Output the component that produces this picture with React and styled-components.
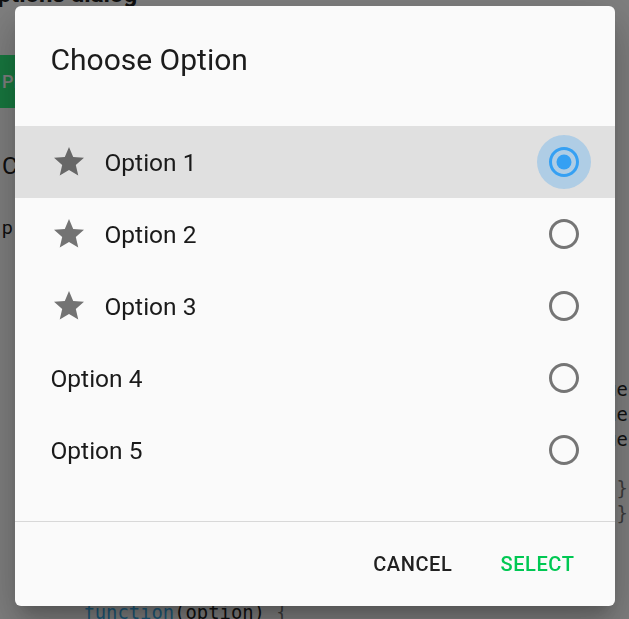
import React, { useState } from 'react';
import styled, { createGlobalStyle } from 'styled-components';

const GlobalStyle = createGlobalStyle`
  html, body {
    margin: 0;
    padding: 0;
    background: #ffffff;
    overflow: hidden;
  }
  body {
    font-family: Roboto, "Noto Sans", "Liberation Sans", sans-serif;
    color: #212121;
  }
`;

/* page behind the dialog */

const Page = styled.main`
  margin: -21px 0 0 -19px;
  width: 760px;
`;

const PageTitle = styled.h2`
  margin: 0;
  font-size: 24px;
  line-height: 30px;
  font-weight: 700;
  white-space: nowrap;
`;

const PickButton = styled.button`
  display: block;
  margin-top: 46px;
  height: 53px;
  padding: 0 24px 0 21px;
  border: none;
  background: #2ef07e;
  color: #ffffff;
  font-family: inherit;
  font-size: 18px;
  font-weight: 500;
  text-transform: uppercase;
`;

const Result = styled.p`
  margin: 40px 0 0 21px;
  font-size: 24px;
  line-height: 36px;
`;

const Hint = styled.p`
  margin: 30px 0 0 21px;
  font-size: 19px;
  line-height: 28px;
`;

const Code = styled.pre`
  margin: 136px 0 0 57px;
  font-family: "DejaVu Sans Mono", "Liberation Mono", monospace;
  font-size: 18.85px;
  line-height: 24.8px;
  color: #222222;
`;

const Punct = styled.span`
  color: #777777;
`;

const Keyword = styled.span`
  color: #3ab0f0;
`;

/* dialog */

const Backdrop = styled.div`
  position: fixed;
  inset: 0;
  background: rgba(0, 0, 0, 0.5);
  display: flex;
  justify-content: center;
  align-items: flex-start;
  padding-top: 6px;
`;

const Dialog = styled.section`
  width: 600px;
  background: #fafafa;
  border-radius: 6px;
  overflow: hidden;
  box-shadow: 0 11px 15px -7px rgba(0, 0, 0, 0.2),
    0 24px 38px 3px rgba(0, 0, 0, 0.14),
    0 9px 46px 8px rgba(0, 0, 0, 0.12);
`;

const DialogTitle = styled.h2`
  box-sizing: border-box;
  height: 120px;
  margin: 0;
  padding: 36px 36px 0;
  font-size: 30px;
  line-height: 36px;
  font-weight: 400;
  color: #1c1c1c;
`;

const OptionList = styled.ul`
  list-style: none;
  margin: 0;
  padding: 0 0 35px;
  border-bottom: 1px solid #d8d8d8;
`;

const OptionRow = styled.li`
  display: flex;
  align-items: center;
  height: 72px;
  padding: 0 24px 0 36px;
  background: ${p => (p.$selected ? '#e0e0e0' : 'transparent')};
  cursor: pointer;
`;

const OptionIcon = styled.svg`
  width: 36px;
  height: 36px;
  margin-right: 18px;
  flex-shrink: 0;
  fill: rgba(0, 0, 0, 0.54);
`;

const OptionLabel = styled.span`
  flex: 1;
  font-size: 24.5px;
  font-weight: 400;
  color: #1a1a1a;
`;

const RadioBox = styled.span`
  width: 54px;
  height: 54px;
  border-radius: 50%;
  display: flex;
  align-items: center;
  justify-content: center;
  background: ${p => (p.$checked ? 'rgba(33, 150, 243, 0.26)' : 'transparent')};
`;

const RadioSvg = styled.svg`
  width: 36px;
  height: 36px;
  fill: ${p => (p.$checked ? '#35a0f3' : '#757575')};
`;

const Actions = styled.footer`
  display: flex;
  justify-content: flex-end;
  align-items: center;
  gap: 24px;
  height: 84px;
  padding-right: 28px;
`;

const ActionButton = styled.button`
  border: none;
  background: none;
  padding: 0 12px;
  height: 54px;
  font-family: inherit;
  font-size: 20px;
  font-weight: 500;
  letter-spacing: 0.6px;
  text-transform: uppercase;
  color: ${p => (p.$primary ? '#00c853' : '#212121')};
  cursor: pointer;
`;

const StarIcon = () => (
  <OptionIcon viewBox="0 0 24 24">
    <path d="M12 17.27L18.18 21l-1.64-7.03L22 9.24l-7.19-.61L12 2 9.19 8.63 2 9.24l5.46 4.73L5.82 21z" />
  </OptionIcon>
);

const Radio = ({ checked }) => (
  <RadioBox $checked={checked}>
    <RadioSvg viewBox="0 0 24 24" $checked={checked}>
      <path d="M12 2C6.48 2 2 6.48 2 12s4.48 10 10 10 10-4.48 10-10S17.52 2 12 2zm0 18c-4.42 0-8-3.58-8-8s3.58-8 8-8 8 3.58 8 8-3.58 8-8 8z" />
      {checked && <circle cx="12" cy="12" r="5" />}
    </RadioSvg>
  </RadioBox>
);

const options = [
  { label: 'Option 1', icon: true },
  { label: 'Option 2', icon: true },
  { label: 'Option 3', icon: true },
  { label: 'Option 4', icon: false },
  { label: 'Option 5', icon: false }
];

// the snippet behind the dialog: the "e" of value and the closing braces sit in column 51
const entry = n => `{ type: 'radio', label: 'Option ${n}', value: 'option${n}' },`;
const entryIndent = ' '.repeat(51 - (entry(1).indexOf('value') + 4));
const braceIndent = ' '.repeat(51);

export default function App() {
  const [selected, setSelected] = useState(0);

  return (
    <>
      <GlobalStyle />
      <Page>
        <PageTitle>Options dialog</PageTitle>
        <PickButton>Pick option</PickButton>
        <Result>Chosen option: Option 1</Result>
        <Hint>p = the option that was picked</Hint>
        <Code>
          {[1, 2, 3].map(n => entryIndent + entry(n) + '\n').join('')}
          {'\n'}
          <Punct>{braceIndent + '}),\n' + braceIndent + '}\n'}</Punct>
          {'\n\n\n    '}
          <Keyword>function</Keyword>(option) <Punct>{'{'}</Punct>
        </Code>
      </Page>

      <Backdrop>
        <Dialog>
          <DialogTitle>Choose Option</DialogTitle>
          <OptionList>
            {options.map((opt, i) => (
              <OptionRow key={opt.label} $selected={i === selected} onClick={() => setSelected(i)}>
                {opt.icon && <StarIcon />}
                <OptionLabel>{opt.label}</OptionLabel>
                <Radio checked={i === selected} />
              </OptionRow>
            ))}
          </OptionList>
          <Actions>
            <ActionButton>Cancel</ActionButton>
            <ActionButton $primary>Select</ActionButton>
          </Actions>
        </Dialog>
      </Backdrop>
    </>
  );
}
